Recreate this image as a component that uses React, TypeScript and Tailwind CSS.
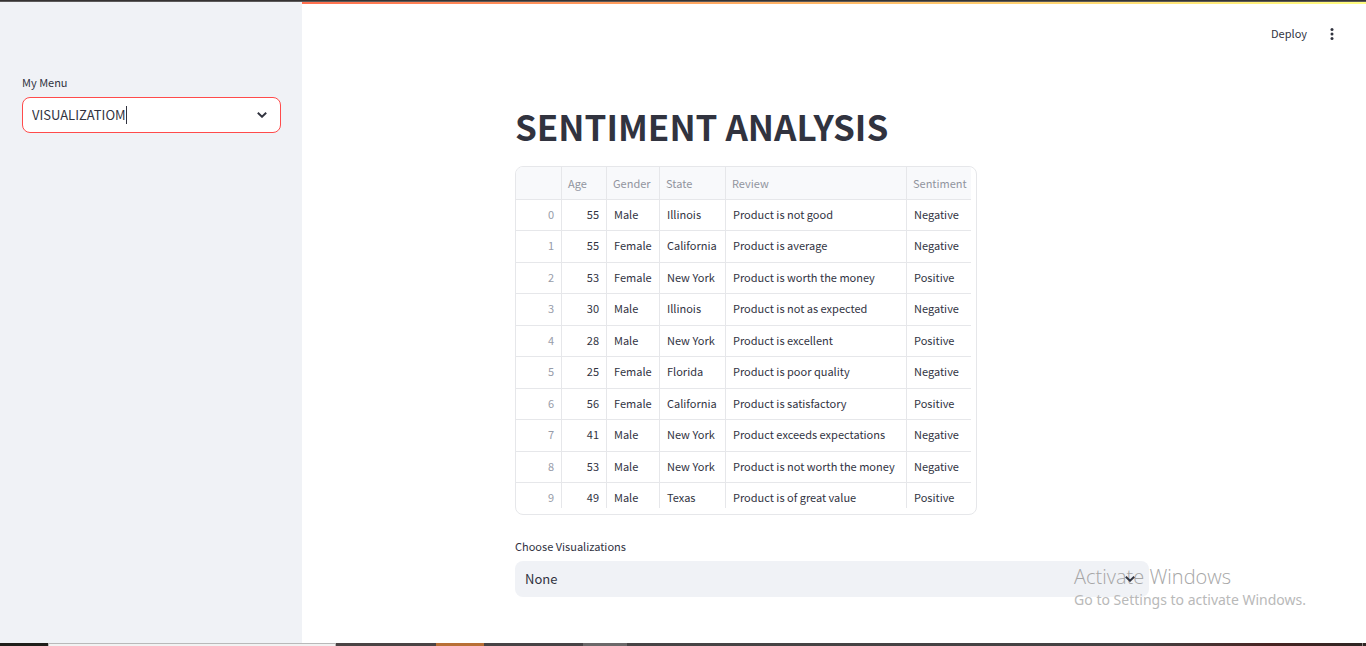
const rows = [
  { age: 55, gender: "Male", state: "Illinois", review: "Product is not good", sentiment: "Negative" },
  { age: 55, gender: "Female", state: "California", review: "Product is average", sentiment: "Negative" },
  { age: 53, gender: "Female", state: "New York", review: "Product is worth the money", sentiment: "Positive" },
  { age: 30, gender: "Male", state: "Illinois", review: "Product is not as expected", sentiment: "Negative" },
  { age: 28, gender: "Male", state: "New York", review: "Product is excellent", sentiment: "Positive" },
  { age: 25, gender: "Female", state: "Florida", review: "Product is poor quality", sentiment: "Negative" },
  { age: 56, gender: "Female", state: "California", review: "Product is satisfactory", sentiment: "Positive" },
  { age: 41, gender: "Male", state: "New York", review: "Product exceeds expectations", sentiment: "Negative" },
  { age: 53, gender: "Male", state: "New York", review: "Product is not worth the money", sentiment: "Negative" },
  { age: 49, gender: "Male", state: "Texas", review: "Product is of great value", sentiment: "Positive" },
];

function Chevron() {
  return (
    <svg viewBox="0 0 10 6" className="h-[6px] w-[10px]" fill="none" stroke="#31333f" strokeWidth="1.9" aria-hidden="true">
      <path d="M0.8 0.8 L5 4.8 L9.2 0.8" />
    </svg>
  );
}

function Sidebar() {
  return (
    <aside className="w-[302px] shrink-0 bg-[#f0f2f6] pt-[70px] pr-[21px] pl-[22px]">
      <label htmlFor="menu" className="block text-[11px] leading-5">
        My Menu
      </label>
      <div className="mt-[5px] flex h-9 items-center rounded-lg border border-[#ff4b4b] bg-white pr-[13px] pl-[9px]">
        <input
          id="menu"
          role="combobox"
          aria-expanded="false"
          aria-controls="menu-options"
          defaultValue="VISUALIZATIOM"
          className="field-sizing-content bg-transparent text-[13px] leading-5 outline-none"
        />
        <span className="h-[18px] w-px bg-[#31333f]" />
        <span className="ml-auto">
          <Chevron />
        </span>
      </div>
    </aside>
  );
}

function ReviewsTable() {
  return (
    <div className="w-[462px] overflow-hidden rounded-lg border border-[#e6e7ea] pb-[6px]">
      <div className="h-[341px] overflow-hidden">
        <table className="w-[455px] table-fixed border-separate border-spacing-0 text-left text-[11px] whitespace-nowrap">
          <colgroup>
            <col className="w-[46px]" />
            <col className="w-[45px]" />
            <col className="w-[53px]" />
            <col className="w-[66px]" />
            <col className="w-[181px]" />
            <col className="w-16" />
          </colgroup>
          <thead>
            <tr className="h-[33px] bg-[#f8f9fb] text-[#91949e] [&>th]:border-b [&>th]:border-[#e6e7ea] [&>th]:px-[6px] [&>th]:py-0 [&>th]:font-normal [&>th:not(:last-child)]:border-r">
              <th scope="col" aria-label="Index" />
              <th scope="col">Age</th>
              <th scope="col">Gender</th>
              <th scope="col">State</th>
              <th scope="col">Review</th>
              <th scope="col">Sentiment</th>
            </tr>
          </thead>
          <tbody className="leading-7 [&>tr:nth-child(even)]:h-8 [&>tr:nth-child(odd)]:h-[31px]">
            {rows.map((row, i) => (
              <tr
                key={i}
                className="[&>*]:border-b [&>*]:border-[#e6e7ea] [&>*]:px-[7px] [&>*]:py-0 [&>*]:align-top [&>*]:font-normal [&>*:not(:last-child)]:border-r"
              >
                <th scope="row" className="text-right text-[#979ca9]">{i}</th>
                <td className="text-right">{row.age}</td>
                <td>{row.gender}</td>
                <td>{row.state}</td>
                <td>{row.review}</td>
                <td>{row.sentiment}</td>
              </tr>
            ))}
          </tbody>
        </table>
      </div>
    </div>
  );
}

function Main() {
  return (
    <div className="flex min-w-0 flex-1 flex-col bg-white">
      <div className="h-[2px] bg-linear-to-r from-[#ff6f4f] to-[#fffd80]" />
      <header className="flex h-[60px] items-center justify-end gap-[21px] pr-[30px]">
        <button type="button" className="pb-[2px] text-[11px] leading-5">Deploy</button>
        <button type="button" aria-label="More options">
          <svg viewBox="0 0 8 12" className="h-3 w-2" fill="#31333f" aria-hidden="true">
            <circle cx="4" cy="1.6" r="1.5" />
            <circle cx="4" cy="6" r="1.5" />
            <circle cx="4" cy="10.4" r="1.5" />
          </svg>
        </button>
      </header>
      <main className="mx-auto w-full max-w-[638px] pt-[38px] pr-1 pb-[46px]">
        <h1 className="text-[35px] leading-[48px] font-bold">SENTIMENT ANALYSIS</h1>
        <div className="mt-4">
          <ReviewsTable />
        </div>
        <label htmlFor="visualization" className="mt-[21px] block text-[11px] leading-5">
          Choose Visualizations
        </label>
        <div className="relative mt-[5px]">
          <select
            id="visualization"
            className="block h-9 w-full appearance-none rounded-lg bg-[#f0f2f6] px-[10px] text-[13px] leading-5 outline-none"
          >
            <option>None</option>
          </select>
          <span className="pointer-events-none absolute inset-y-0 right-[14px] z-10 flex items-center">
            <Chevron />
          </span>
        </div>
      </main>
    </div>
  );
}

function Taskbar() {
  return (
    <footer className="flex h-[3px] bg-[#454243]">
      <div className="w-12 bg-[#1f1e1a]" />
      <div className="w-72 border-x border-t border-[#b9b9b9] bg-[#f2f2f2]" />
      <div className="w-[100px] bg-[#4a4344]" />
      <div className="w-12 bg-[#b86f35]" />
      <div className="w-[99px] bg-[#474345]" />
      <div className="w-11 bg-[#6b6869]" />
      <div className="flex-1 bg-linear-to-r from-[#474445] via-[#444142] via-80% to-[#482322]" />
      <div className="w-[91px] bg-linear-to-r from-[#482322] to-[#2e2523]" />
      <div className="w-1 border-l border-[#8d8583] bg-[#2e2523]" />
    </footer>
  );
}

export default function App() {
  return (
    <div className="relative flex min-h-screen flex-col font-['Noto_Sans_CJK_SC',sans-serif] text-[#31333f]">
      <div className="h-[2px] border-b border-[#5c5a5a] bg-[#353333]" />
      <div className="flex flex-1">
        <Sidebar />
        <Main />
      </div>
      <Taskbar />
      <div className="pointer-events-none absolute right-[60px] bottom-9 font-['Open_Sans',sans-serif]">
        <p className="text-xl leading-[26px] font-light text-[#a6a6a6]">Activate Windows</p>
        <p className="font-['Noto_Sans',sans-serif] text-sm leading-5 text-[#b9b9b9]">Go to Settings to activate Windows.</p>
      </div>
    </div>
  );
}
